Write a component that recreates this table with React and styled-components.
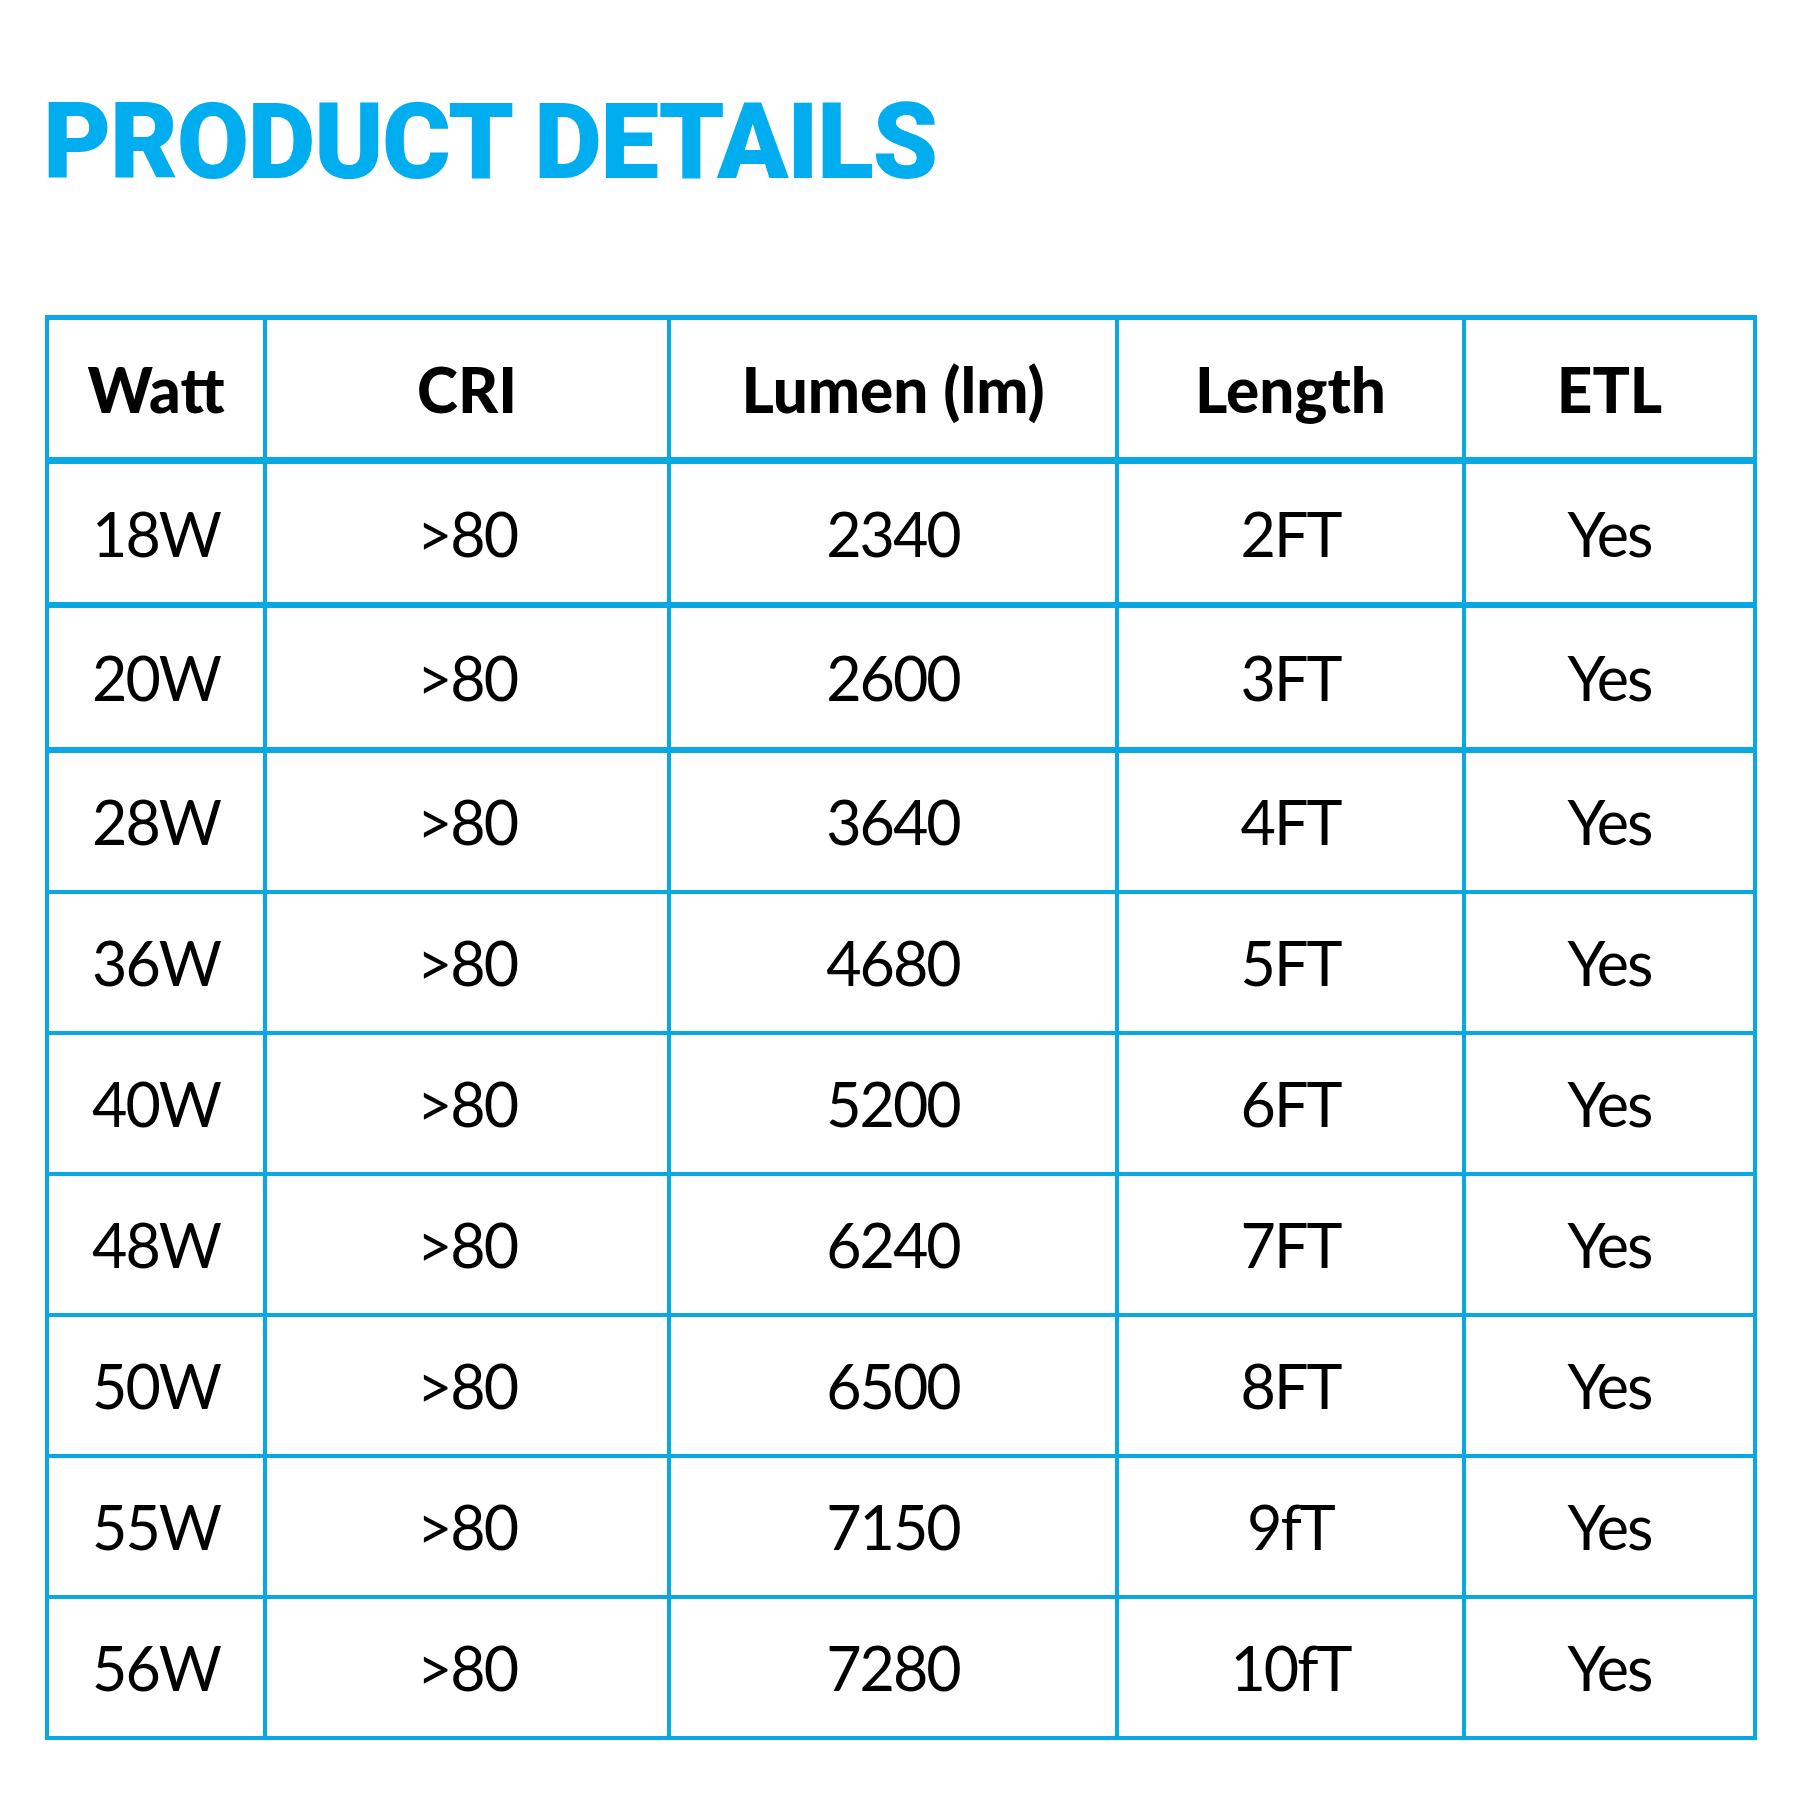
import React from "react";
import styled, { createGlobalStyle } from "styled-components";

const GlobalStyle = createGlobalStyle`
    html, body {
        margin: 0;
        padding: 0;
        background: #fff;
    }
    * {
        box-sizing: border-box;
    }
`;

const LINE = "#0aa8e2";

const Page = styled.div`
    width: 1800px;
    height: 1800px;
    padding: 90px 0 0 45px;
    background: #fff;
`;

const Title = styled.h1`
    margin: 0 0 120px -2px;
    font-family: Roboto, "Liberation Sans", sans-serif;
    font-weight: 900;
    font-size: 105px;
    line-height: 105px;
    letter-spacing: -1.6px;
    color: #00aeef;
`;

const Table = styled.div`
    display: inline-flex;
    flex-direction: column;
    border-top: 5px solid ${LINE};
    border-left: 4px solid ${LINE};
`;

const Row = styled.div`
    display: flex;
    height: ${p => p.$height}px;
    border-bottom: ${p => p.$line}px solid ${LINE};
`;

const Cell = styled.div`
    width: ${p => p.$width}px;
    display: flex;
    align-items: center;
    justify-content: center;
    border-right: 4px solid ${LINE};
    font-family: Lato, "Open Sans", sans-serif;
    font-size: ${p => (p.$head ? 62 : 61)}px;
    font-weight: ${p => (p.$head ? 900 : 400)};
    letter-spacing: ${p => (p.$head ? "0px" : "-2px")};
    color: #000;
`;

const widths = [218, 404, 448, 347, 291];

const headers = ["Watt", "CRI", "Lumen (lm)", "Length", "ETL"];

const rows = [
    ["18W", ">80", "2340", "2FT", "Yes"],
    ["20W", ">80", "2600", "3FT", "Yes"],
    ["28W", ">80", "3640", "4FT", "Yes"],
    ["36W", ">80", "4680", "5FT", "Yes"],
    ["40W", ">80", "5200", "6FT", "Yes"],
    ["48W", ">80", "6240", "7FT", "Yes"],
    ["50W", ">80", "6500", "8FT", "Yes"],
    ["55W", ">80", "7150", "9fT", "Yes"],
    ["56W", ">80", "7280", "10fT", "Yes"]
];

// first rows carry heavier rules, like the source sheet
const rowLine = i => (i < 2 ? 6 : 4);
const rowHeight = i => (i === 0 ? 144 : i === 1 ? 145 : 141);

export default function App() {
    return (
        <Page>
            <GlobalStyle />
            <Title>PRODUCT DETAILS</Title>
            <Table>
                <Row $height={144} $line={7}>
                    {headers.map((h, c) => (
                        <Cell key={h} $width={widths[c]} $head>
                            {h}
                        </Cell>
                    ))}
                </Row>
                {rows.map((r, i) => (
                    <Row key={r[0]} $height={rowHeight(i)} $line={rowLine(i)}>
                        {r.map((v, c) => (
                            <Cell key={c} $width={widths[c]}>
                                {v}
                            </Cell>
                        ))}
                    </Row>
                ))}
            </Table>
        </Page>
    );
}
